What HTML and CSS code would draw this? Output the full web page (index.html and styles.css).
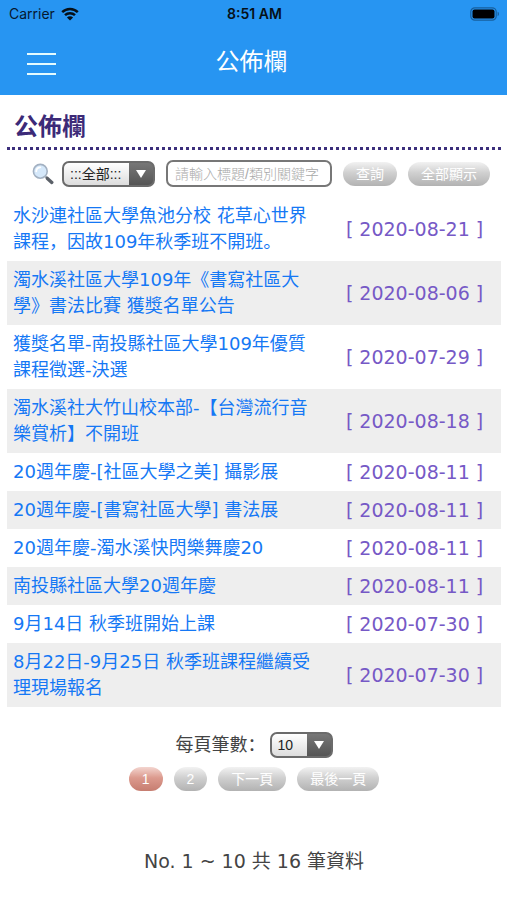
FILE: index.html
```html
<!DOCTYPE html>
<html lang="zh">
<head>
  <meta charset="UTF-8" />
  <meta name="viewport" content="width=device-width, initial-scale=1.0"/>
  <title>公佈欄</title>
  <link rel="stylesheet" href="styles.css">
</head>
<body>
  <header class="header">
    <div class="status-bar">
      <div class="carrier">
        <span>Carrier</span>
        <svg class="wifi" viewBox="0 0 18 14" aria-hidden="true">
          <path d="M1.2 5.2a11.2 11.2 0 0 1 15.6 0M4 8.2a7.2 7.2 0 0 1 10 0" fill="none" stroke="#061018" stroke-width="2.5"/>
          <path d="M9 13.6L5.9 10.5a4.4 4.4 0 0 1 6.2 0z" fill="#061018"/>
        </svg>
      </div>
      <div class="clock">8:51 AM</div>
      <svg class="battery" viewBox="0 0 30 14" aria-hidden="true">
        <rect x=".8" y=".8" width="25.4" height="12.4" rx="4" fill="none" stroke="#175f9d" stroke-width="1.2"/>
        <rect x="2.5" y="2.5" width="22" height="9" rx="2" fill="#000"/>
        <path d="M27.6 4.8c1.8.6 1.8 3.8 0 4.4z" fill="#175f9d"/>
      </svg>
    </div>
    <div class="navbar">
      <button class="menu-button" aria-label="選單"><span></span><span></span><span></span></button>
      <div class="nav-title">公佈欄</div>
    </div>
  </header>

  <main class="container">
    <h1 class="page-title">公佈欄</h1>

    <form class="search-bar">
      <svg class="search-icon" viewBox="0 0 22 22" aria-hidden="true">
        <path d="M13.4 13.4l2.4 2.4" stroke="#8d949c" stroke-width="2"/>
        <path d="M15.4 15.4l4.4 4" stroke="#5b6068" stroke-width="3.4" stroke-linecap="round"/>
        <circle cx="8.3" cy="8.3" r="6.9" fill="#d5e8fa" stroke="#a3b1c2" stroke-width="1.6"/>
        <path d="M4.3 8.3a4 4 0 0 1 4-4" fill="none" stroke="#fff" stroke-width="1.8" stroke-linecap="round"/>
      </svg>
      <span class="select-box">
        <select class="select-type" aria-label="類別">
          <option>:::全部:::</option>
        </select>
      </span>
      <input class="search-input" type="text" placeholder="請輸入標題/類別關鍵字" aria-label="關鍵字">
      <button class="pill" type="button">查詢</button>
      <button class="pill" type="button">全部顯示</button>
    </form>

    <table class="news">
      <tbody>
        <tr>
          <td><a href="#">水沙連社區大學魚池分校 花草心世界課程，因故109年秋季班不開班。</a></td>
          <td class="date">[ 2020-08-21 ]</td>
        </tr>
        <tr>
          <td><a href="#">濁水溪社區大學109年《書寫社區大學》書法比賽 獲獎名單公告</a></td>
          <td class="date">[ 2020-08-06 ]</td>
        </tr>
        <tr>
          <td><a href="#">獲獎名單-南投縣社區大學109年優質課程徵選-決選</a></td>
          <td class="date">[ 2020-07-29 ]</td>
        </tr>
        <tr>
          <td><a href="#">濁水溪社大竹山校本部-【台灣流行音樂賞析】不開班</a></td>
          <td class="date">[ 2020-08-18 ]</td>
        </tr>
        <tr>
          <td><a href="#">20週年慶-[社區大學之美] 攝影展</a></td>
          <td class="date">[ 2020-08-11 ]</td>
        </tr>
        <tr>
          <td><a href="#">20週年慶-[書寫社區大學] 書法展</a></td>
          <td class="date">[ 2020-08-11 ]</td>
        </tr>
        <tr>
          <td><a href="#">20週年慶-濁水溪快閃樂舞慶20</a></td>
          <td class="date">[ 2020-08-11 ]</td>
        </tr>
        <tr>
          <td><a href="#">南投縣社區大學20週年慶</a></td>
          <td class="date">[ 2020-08-11 ]</td>
        </tr>
        <tr>
          <td><a href="#">9月14日 秋季班開始上課</a></td>
          <td class="date">[ 2020-07-30 ]</td>
        </tr>
        <tr>
          <td><a href="#">8月22日-9月25日 秋季班課程繼續受理現場報名</a></td>
          <td class="date">[ 2020-07-30 ]</td>
        </tr>
      </tbody>
    </table>

    <div class="page-size">
      <label for="pageSize">每頁筆數：</label>
      <span class="select-box">
        <select class="select-size" id="pageSize">
          <option>10</option>
        </select>
      </span>
    </div>

    <nav class="pagination">
      <button class="pill current">1</button>
      <button class="pill">2</button>
      <button class="pill">下一頁</button>
      <button class="pill">最後一頁</button>
    </nav>

    <p class="total">No. 1 ~ 10 共 16 筆資料</p>
  </main>
</body>
</html>
```
FILE: styles.css
```css
* {
  box-sizing: border-box;
}
body {
  margin: 0;
  background-color: #fff;
  color: #444;
  font-family: "DejaVu Sans", "Noto Sans CJK SC", sans-serif;
  font-size: 18px;
  line-height: 26px;
}
button, input, select {
  font-family: "Liberation Sans", "Noto Sans CJK SC", sans-serif;
  font-size: 14px;
  margin: 0;
}

/* header */
.header {
  background-color: #2795f2;
}
.status-bar {
  display: grid;
  grid-template-columns: 1fr auto 1fr;
  align-items: center;
  height: 28px;
  padding: 0 7px 0 9px;
  font-family: Inter, sans-serif;
  font-size: 14px;
  line-height: 24px;
  color: #061830;
}
.carrier {
  display: flex;
  align-items: center;
  gap: 6px;
}
.wifi {
  width: 18px;
  height: 14px;
}
.clock {
  font-weight: 600;
  color: #061018;
}
.battery {
  width: 30px;
  height: 14px;
  justify-self: end;
}
.navbar {
  display: grid;
  grid-template-columns: 56px 1fr 60px;
  align-items: center;
  height: 67px;
}
.menu-button {
  display: flex;
  flex-direction: column;
  gap: 8px;
  padding: 4px 0 0 27px;
  border: none;
  background: none;
  cursor: pointer;
}
.menu-button span {
  width: 29px;
  height: 2px;
  background-color: #e4fbff;
}
.nav-title {
  text-align: center;
  font-size: 24px;
  color: #fff;
}

/* content */
.container {
  padding: 12px 6px 0 7px;
}
.page-title {
  margin: 0;
  padding: 0 7px;
  border-bottom: 3px dotted #3c2f7c;
  font-size: 24px;
  font-weight: 700;
  line-height: 40px;
  color: #3c2a78;
}
.search-bar {
  display: flex;
  align-items: center;
  justify-content: flex-end;
  height: 47px;
  padding-right: 11px;
  gap: 11px;
}
.search-icon {
  width: 22px;
  height: 22px;
  margin-right: -3px;
}
.select-box {
  position: relative;
  display: inline-flex;
}
.select-box select {
  appearance: none;
  height: 26px;
  padding: 0 26px 0 6px;
  border: 2px solid #6b6b6b;
  border-radius: 7px;
  background: linear-gradient(#777, #555) right / 24px 100% no-repeat, linear-gradient(#fff, #ddd);
  color: #222;
}
.select-box::after {
  content: "";
  position: absolute;
  right: 9px;
  top: 9px;
  border: 5px solid transparent;
  border-top: 8px solid #fff;
  border-bottom: none;
  pointer-events: none;
}
.select-type {
  width: 93px;
}
.select-size {
  width: 63px;
}
.search-input {
  flex: 0 1 166px;
  min-width: 0;
  height: 27px;
  padding: 0 7px;
  border: 2px solid #777;
  border-radius: 7px;
  background-color: #fff;
}
.search-input::placeholder {
  color: #a9a9a9;
  font-weight: 300;
}
.pill {
  height: 24px;
  padding: 0 13px;
  border: none;
  border-radius: 12px;
  background: linear-gradient(#f2f2f2, #d0d0d0 45%, #b2b2b2);
  color: #fff;
  line-height: 24px;
  cursor: pointer;
}

/* list */
.news {
  width: 100%;
  table-layout: fixed;
  border-collapse: collapse;
}
.news td {
  padding: 6px 10px 6px 6px;
}
.news tr:nth-child(even) {
  background-color: #eee;
}
.news a {
  color: #1578f5;
  text-decoration: none;
}
.news .date {
  width: 35%;
  padding: 6px 0;
  text-align: center;
  font-size: 19px;
  color: #7659c6;
  white-space: nowrap;
}

/* paging */
.page-size {
  display: flex;
  align-items: center;
  justify-content: center;
  gap: 4px;
  margin-top: 25px;
}
.pagination {
  display: flex;
  justify-content: center;
  gap: 11px;
  margin-top: 9px;
}
.pagination .current {
  background: linear-gradient(#f3d5cf, #dc9a8e 45%, #c67d70);
}
.total {
  margin: 57px 0 26px;
  text-align: center;
  font-size: 19px;
}
```
